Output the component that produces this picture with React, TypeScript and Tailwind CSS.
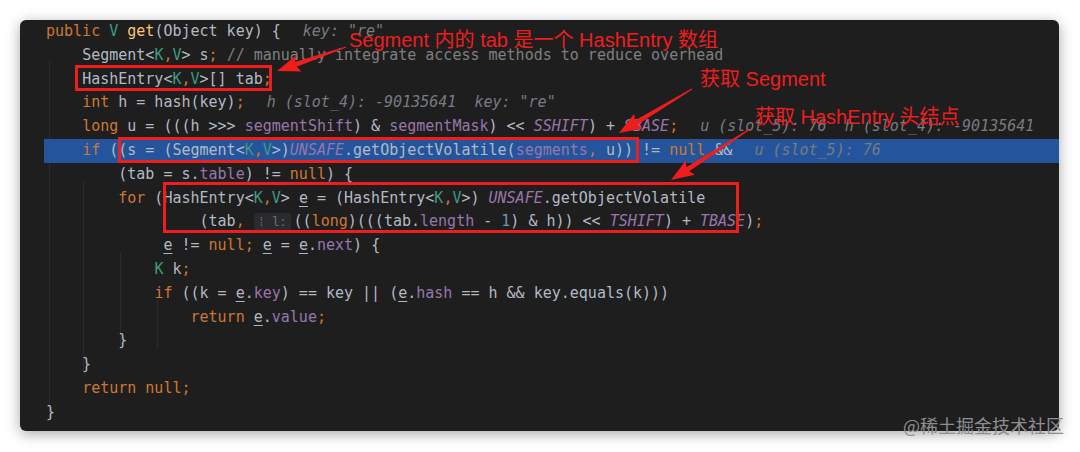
import type { ReactNode } from 'react';

const Kw = ({ children }: { children: ReactNode }) => <span className="text-[#cc7832]">{children}</span>;
const Tp = ({ children }: { children: ReactNode }) => <span className="text-[#3f9a80]">{children}</span>;
const Fd = ({ children }: { children: ReactNode }) => <span className="text-[#9876aa]">{children}</span>;
const St = ({ children }: { children: ReactNode }) => <span className="text-[#9876aa] italic">{children}</span>;
const Nm = ({ children }: { children: ReactNode }) => <span className="text-[#6897bb]">{children}</span>;
const Cm = ({ children }: { children: ReactNode }) => <span className="text-[#7f7f7f]">{children}</span>;
const Ul = ({ children }: { children: ReactNode }) => (
  <span className="underline underline-offset-[3px] decoration-[#a9b7c6]">{children}</span>
);
const Hint = ({ children }: { children: ReactNode }) => (
  <span className="ml-[22px] italic text-[#787b80]">{children}</span>
);

const KV = () => (
  <>
    {'<'}
    <Tp>K</Tp>
    <Kw>,</Kw>
    <Tp>V</Tp>
    {'>'}
  </>
);

function Line({ children, active }: { children?: ReactNode; active?: boolean }) {
  return (
    <div className={`h-[23.8px] leading-[23.8px] whitespace-pre pl-[2px] ${active ? 'bg-[#24559c]' : ''}`}>
      {children}
    </div>
  );
}

function arrow(x1: number, y1: number, x2: number, y2: number) {
  const headLen = 20;
  const headW = 17;
  const tailW = 1.2;
  const neckW = 5;
  const dx = x2 - x1;
  const dy = y2 - y1;
  const len = Math.hypot(dx, dy);
  const ux = dx / len;
  const uy = dy / len;
  const nx = -uy;
  const ny = ux;
  const bx = x2 - ux * headLen;
  const by = y2 - uy * headLen;
  const wx = x2 - ux * (headLen + 3);
  const wy = y2 - uy * (headLen + 3);
  const pts = [
    [x1 + (nx * tailW) / 2, y1 + (ny * tailW) / 2],
    [bx + (nx * neckW) / 2, by + (ny * neckW) / 2],
    [wx + (nx * headW) / 2, wy + (ny * headW) / 2],
    [x2, y2],
    [wx - (nx * headW) / 2, wy - (ny * headW) / 2],
    [bx - (nx * neckW) / 2, by - (ny * neckW) / 2],
    [x1 - (nx * tailW) / 2, y1 - (ny * tailW) / 2],
  ];
  return pts.map((p) => `${p[0].toFixed(1)},${p[1].toFixed(1)}`).join(' ');
}

export default function App() {
  return (
    <div className="relative w-[1080px] h-[452px] bg-white overflow-hidden">
      <div className="relative mt-[20px] ml-[20px] w-[1039px] h-[411px] rounded-[6px] bg-[#1e1e1f] shadow-[0_3px_14px_rgba(0,0,0,0.35)] overflow-hidden">
        {/* indent guides */}
        <div className="absolute left-[29px] top-[42px] h-[358px] w-px bg-[#2b2b2c]" />
        <div className="absolute left-[63px] top-[161px] h-[190px] w-px bg-[#2b2b2c]" />
        <div className="absolute left-[100px] top-[232px] h-[96px] w-px bg-[#2b2b2c]" />
        <div className="absolute left-[137px] top-[280px] h-[48px] w-px bg-[#2b2b2c]" />

        <div className="relative pl-[24px] text-[15px] text-[#b3b9c2] font-['DejaVu_Sans_Mono','Liberation_Mono',monospace]">
          <Line>
            <Kw>public</Kw> <Tp>V</Tp> <span className="text-[#ffc66d]">get</span>(Object key) {'{'}
            <Hint>key: "re"</Hint>
          </Line>
          <Line>
            {'    '}Segment<KV /> s<Kw>;</Kw> <Cm>// manually integrate access methods to reduce overhead</Cm>
          </Line>
          <Line>
            {'    '}HashEntry<KV />[] tab<Kw>;</Kw>
          </Line>
          <Line>
            {'    '}<Kw>int</Kw> h = hash(key)<Kw>;</Kw>
            <Hint>h (slot_4): -90135641  key: "re"</Hint>
          </Line>
          <Line>
            {'    '}<Kw>long</Kw> u = (((h {'>>>'} <Fd>segmentShift</Fd>) & <Fd>segmentMask</Fd>) {'<<'} <St>SSHIFT</St>) + <St>SBASE</St>
            <Kw>;</Kw>
            <Hint>u (slot_5): 76  h (slot_4): -90135641</Hint>
          </Line>
          <Line active>
            {'    '}<Kw>if</Kw> ((s = (Segment<KV />)<St>UNSAFE</St>.getObjectVolatile(<Fd>segments</Fd>
            <Kw>,</Kw> u)) != <Kw>null</Kw> &&
            <Hint>u (slot_5): 76</Hint>
          </Line>
          <Line>
            {'        '}(tab = s.<Fd>table</Fd>) != <Kw>null</Kw>) {'{'}
          </Line>
          <Line>
            {'        '}<Kw>for</Kw> (HashEntry<KV /> <Ul>e</Ul> = (HashEntry<KV />) <St>UNSAFE</St>.getObjectVolatile
          </Line>
          <Line>
            {'                 '}(tab<Kw>,</Kw>{' '}
            <span className="inline-block h-[18px] leading-[18px] px-[4px] mr-[3px] rounded-[3px] bg-[#2a2b2d] text-[12px] text-[#6c7077] align-middle">
              ⁞ l:
            </span>
            ((<Kw>long</Kw>)(((tab.<Fd>length</Fd> - <Nm>1</Nm>) & h)) {'<<'} <St>TSHIFT</St>) + <St>TBASE</St>)<Kw>;</Kw>
          </Line>
          <Line>
            {'             '}<Ul>e</Ul> != <Kw>null;</Kw> <Ul>e</Ul> = <Ul>e</Ul>.<Fd>next</Fd>) {'{'}
          </Line>
          <Line>
            {'            '}<Tp>K</Tp> k<Kw>;</Kw>
          </Line>
          <Line>
            {'            '}<Kw>if</Kw> ((k = <Ul>e</Ul>.<Fd>key</Fd>) == key || (<Ul>e</Ul>.<Fd>hash</Fd> == h && key.equals(k)))
          </Line>
          <Line>
            {'                '}<Kw>return</Kw> <Ul>e</Ul>.<Fd>value</Fd>
            <Kw>;</Kw>
          </Line>
          <Line>{'        }'}</Line>
          <Line>{'    }'}</Line>
          <Line>
            {'    '}<Kw>return null;</Kw>
          </Line>
          <Line>{'}'}</Line>
        </div>
      </div>

      {/* annotations */}
      <svg className="absolute inset-0 pointer-events-none" width="1080" height="452" viewBox="0 0 1080 452">
        <g fill="none" stroke="#f01d1d" strokeWidth="3">
          <rect x="76.5" y="66.5" width="194" height="23" />
          <rect x="119.5" y="138.5" width="518" height="23" />
          <rect x="164.5" y="183.5" width="573" height="48" />
        </g>
        <g fill="#f01d1d">
          <polygon points={arrow(346, 47, 277, 71)} />
          <polygon points={arrow(692, 89, 619, 133)} />
          <polygon points={arrow(750, 129, 671, 180)} />
        </g>
      </svg>

      <div className="absolute left-[349px] top-[27px] text-[20px] leading-[26px] text-[#f01d1d] whitespace-nowrap font-['Liberation_Sans','Noto_Sans_CJK_SC',sans-serif]">
        Segment 内的 tab 是一个 HashEntry 数组
      </div>
      <div className="absolute left-[700px] top-[66px] text-[20px] leading-[26px] text-[#f01d1d] whitespace-nowrap font-['Liberation_Sans','Noto_Sans_CJK_SC',sans-serif]">
        获取 Segment
      </div>
      <div className="absolute left-[755px] top-[104px] text-[20px] leading-[26px] text-[#f01d1d] whitespace-nowrap font-['Liberation_Sans','Noto_Sans_CJK_SC',sans-serif]">
        获取 HashEntry 头结点
      </div>
      <div className="absolute left-[903px] top-[413px] text-[18px] leading-[24px] text-[#8e8e8e] whitespace-nowrap font-['Noto_Sans_CJK_SC',sans-serif]">
        @稀土掘金技术社区
      </div>
    </div>
  );
}
